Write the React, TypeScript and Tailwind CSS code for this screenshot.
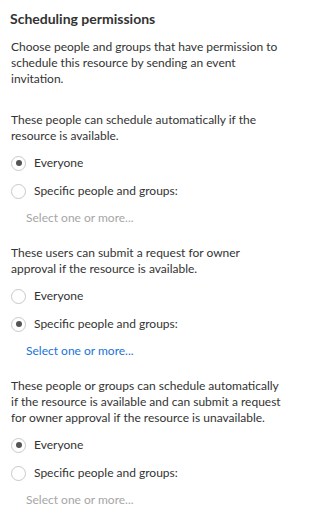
import React, { useState } from 'react';

const font = { fontFamily: 'Lato, "Open Sans", sans-serif' };

interface Section {
    text: string;
    value: 'everyone' | 'specific';
}

const initial: Section[] = [
    { text: 'These people can schedule automatically if the resource is available.', value: 'everyone' },
    { text: 'These users can submit a request for owner approval if the resource is available.', value: 'specific' },
    { text: 'These people or groups can schedule automatically if the resource is available and can submit a request for owner approval if the resource is unavailable.', value: 'everyone' },
];

function Radio({ checked, label, onClick }: { checked: boolean; label: string; onClick: () => void }) {
    return (
        <button type="button" onClick={onClick} className="flex items-center gap-[8px] h-[28px] text-left">
            <span className="w-[15px] h-[15px] rounded-full border border-[#c8c8c8] bg-white flex items-center justify-center">
                {checked && <span className="w-[6px] h-[6px] rounded-full bg-[#555555]" />}
            </span>
            <span className="text-[12px] text-[#333333]">{label}</span>
        </button>
    );
}

export default function App() {
    const [sections, setSections] = useState(initial);

    const setValue = (i: number, value: Section['value']) => {
        setSections(sections.map((s, j) => (j === i ? { ...s, value } : s)));
    };

    return (
        <div className="w-[314px] h-[521px] bg-white pl-[10px] pt-[10px]" style={font}>
            <h2 className="text-[14px] font-bold text-[#333333] leading-[18px]">Scheduling permissions</h2>
            <p className="mt-[11px] pl-[1px] w-[277px] text-[12px] leading-[16px] text-[#333333]">
                Choose people and groups that have permission to schedule this resource by sending an event invitation.
            </p>

            {sections.map((s, i) => (
                <div key={i} className={`pl-[1px] ${i === 0 ? 'mt-[25px]' : 'mt-[14px]'}`}>
                    <p className="w-[276px] text-[12px] leading-[16px] text-[#333333] mb-[5px]">{s.text}</p>
                    <Radio checked={s.value === 'everyone'} label="Everyone" onClick={() => setValue(i, 'everyone')} />
                    <Radio checked={s.value === 'specific'} label="Specific people and groups:" onClick={() => setValue(i, 'specific')} />
                    <div
                        className={`pl-[15px] h-[26px] flex items-center text-[12px] ${s.value === 'specific' ? 'text-[#1a73d9]' : 'text-[#a6a6a6]'}`}
                    >
                        Select one or more...
                    </div>
                </div>
            ))}
        </div>
    );
}
